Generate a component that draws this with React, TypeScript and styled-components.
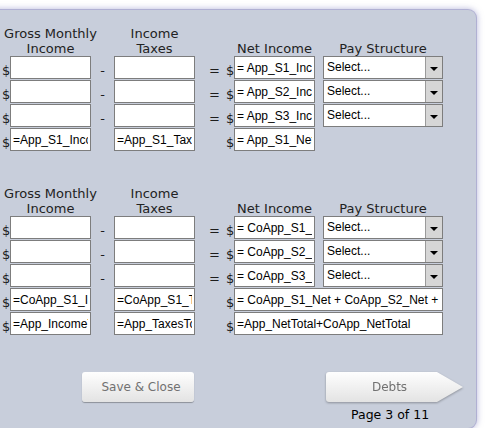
import React from "react";
import styled, { createGlobalStyle, css } from "styled-components";

const Global = createGlobalStyle`
  html, body { margin: 0; padding: 0; background: #ffffff; overflow: hidden; }
  body { font-family: "DejaVu Sans", Verdana, sans-serif; }
`;

const Panel = styled.div`
  box-sizing: border-box;
  margin: 10px 0 0 -12px;
  width: 488px;
  height: 418px;
  padding: 16px 0 0 12px;
  background: #c8cedb;
  border-radius: 8px;
  box-shadow: 0 0 0 1px rgba(150, 150, 195, 0.6), 0 0 6px 1px rgba(120, 120, 185, 0.55);
  display: flex;
  flex-direction: column;
`;

const columns = css`
  display: grid;
  grid-template-columns: 10px 81px 23px 81px 32px 7px 81px 8px 120px;
`;

const Section = styled.section<{ $gap?: number }>`
  margin-top: ${(p) => p.$gap ?? 0}px;
`;

const HeadRow = styled.div`
  ${columns};
  height: 30px;
`;

const Body = styled.div`
  ${columns};
  grid-auto-rows: 24px;
`;

const Header = styled.div<{ $col: number }>`
  grid-column: ${(p) => p.$col};
  display: flex;
  justify-content: center;
  align-items: flex-end;
  font-size: 13px;
  line-height: 15px;
  color: #222222;
  white-space: nowrap;
  text-align: center;
`;

const Sign = styled.div<{ $align?: "left" | "center" | "right" }>`
  font-size: 13px;
  line-height: 23px;
  padding-top: 3px;
  color: #1c1c1c;
  text-align: ${(p) => p.$align ?? "center"};
  white-space: nowrap;
`;

const Dollar = styled(Sign)`
  padding-left: 2px;
`;

const NetDollar = styled(Sign)`
  margin-left: -1px;
`;

const Equals = styled(Sign)`
  padding-right: 7px;
`;

const Field = styled.input<{ $span?: number }>`
  grid-column: span ${(p) => p.$span ?? 1};
  box-sizing: border-box;
  width: 100%;
  height: 23px;
  margin: 0;
  padding: 0 2px;
  border: 1px solid #7d7d7d;
  border-radius: 0;
  background: #ffffff;
  color: #000000;
  font-family: "Liberation Sans", Arial, sans-serif;
  font-size: 12px;
  outline: none;
`;

const Spacer = styled.div``;

const SelectBox = styled.div`
  box-sizing: border-box;
  height: 23px;
  border: 1px solid #7d7d7d;
  background: #ffffff;
  display: grid;
  grid-template-columns: 1fr 17px;
  font-family: "Liberation Sans", Arial, sans-serif;
  font-size: 12px;
  color: #000000;
`;

const SelectText = styled.span`
  padding-left: 3px;
  line-height: 21px;
`;

const SelectArrow = styled.span`
  background: #d6d6d6;
  border-left: 1px solid #9a9a9a;
  display: flex;
  align-items: center;
  justify-content: center;
  padding-top: 2px;
`;

const Footer = styled.div`
  display: flex;
  align-items: flex-start;
  margin-top: 36px;
  padding-left: 82px;
`;

const SaveButton = styled.button`
  box-sizing: border-box;
  width: 112px;
  height: 30px;
  margin: 0;
  padding: 0 0 0 6px;
  border: none;
  border-radius: 3px;
  background: linear-gradient(#fefefe, #e3e3e3);
  box-shadow: 0 1px 1px rgba(0, 0, 0, 0.3);
  color: #717171;
  font-family: "DejaVu Sans", Verdana, sans-serif;
  font-size: 12px;
`;

const NextColumn = styled.div`
  margin-left: 132px;
  display: flex;
  flex-direction: column;
`;

const NextShadow = styled.div`
  filter: drop-shadow(0 1px 1px rgba(0, 0, 0, 0.3));
`;

const NextButton = styled.button`
  box-sizing: border-box;
  display: block;
  width: 137px;
  height: 30px;
  margin: 0;
  padding: 0 10px 0 0;
  border: none;
  border-radius: 3px 0 0 3px;
  clip-path: polygon(0 0, 111px 0, 137px 50%, 111px 100%, 0 100%);
  background: linear-gradient(#fefefe, #e3e3e3);
  color: #717171;
  font-family: "DejaVu Sans", Verdana, sans-serif;
  font-size: 12px;
`;

const PageText = styled.div`
  margin: 5px 0 0 25px;
  font-size: 12.5px;
  line-height: 15px;
  color: #000000;
`;

const Arrow = () => (
  <svg width="8" height="4" viewBox="0 0 8 4">
    <path d="M0 0H8L4 4Z" fill="#000" />
  </svg>
);

const Select = () => (
  <SelectBox>
    <SelectText>Select...</SelectText>
    <SelectArrow>
      <Arrow />
    </SelectArrow>
  </SelectBox>
);

type Row = { gross: string; tax: string; net: string };

const InputRow = ({ gross, tax, net }: Row) => (
  <>
    <Dollar $align="left">$</Dollar>
    <Field defaultValue={gross} readOnly />
    <Sign>-</Sign>
    <Field defaultValue={tax} readOnly />
    <Equals $align="right">=</Equals>
    <NetDollar $align="left">$</NetDollar>
    <Field defaultValue={net} readOnly />
    <Spacer />
    <Select />
  </>
);

const TotalRow = ({ gross, tax, net, wide }: Row & { wide?: boolean }) => (
  <>
    <Dollar $align="left">$</Dollar>
    <Field defaultValue={gross} readOnly />
    <Spacer />
    <Field defaultValue={tax} readOnly />
    <Spacer />
    <NetDollar $align="left">$</NetDollar>
    <Field defaultValue={net} readOnly $span={wide ? 3 : 1} />
    {!wide && (
      <>
        <Spacer />
        <Spacer />
      </>
    )}
  </>
);

const Headers = () => (
  <HeadRow>
    <Header $col={2}>
      Gross Monthly
      <br />
      Income
    </Header>
    <Header $col={4}>
      Income
      <br />
      Taxes
    </Header>
    <Header $col={7}>Net Income</Header>
    <Header $col={9}>Pay Structure</Header>
  </HeadRow>
);

export default function App() {
  return (
    <>
      <Global />
      <Panel>
        <Section>
          <Headers />
          <Body>
            <InputRow gross="" tax="" net="= App_S1_Income - App_S1_Taxes" />
            <InputRow gross="" tax="" net="= App_S2_Income - App_S2_Taxes" />
            <InputRow gross="" tax="" net="= App_S3_Income - App_S3_Taxes" />
            <TotalRow gross="=App_S1_Income" tax="=App_S1_Taxes" net="= App_S1_Net" />
          </Body>
        </Section>
        <Section $gap={34}>
          <Headers />
          <Body>
            <InputRow gross="" tax="" net="= CoApp_S1_Income - CoApp_S1_Taxes" />
            <InputRow gross="" tax="" net="= CoApp_S2_Income - CoApp_S2_Taxes" />
            <InputRow gross="" tax="" net="= CoApp_S3_Income - CoApp_S3_Taxes" />
            <TotalRow
              gross="=CoApp_S1_Income"
              tax="=CoApp_S1_Taxes"
              net="= CoApp_S1_Net + CoApp_S2_Net + CoApp_S3_Net"
              wide
            />
            <TotalRow
              gross="=App_IncomeTotal"
              tax="=App_TaxesTotal"
              net="=App_NetTotal+CoApp_NetTotal"
              wide
            />
          </Body>
        </Section>
        <Footer>
          <SaveButton>Save &amp; Close</SaveButton>
          <NextColumn>
            <NextShadow>
              <NextButton>Debts</NextButton>
            </NextShadow>
            <PageText>Page 3 of 11</PageText>
          </NextColumn>
        </Footer>
      </Panel>
    </>
  );
}
